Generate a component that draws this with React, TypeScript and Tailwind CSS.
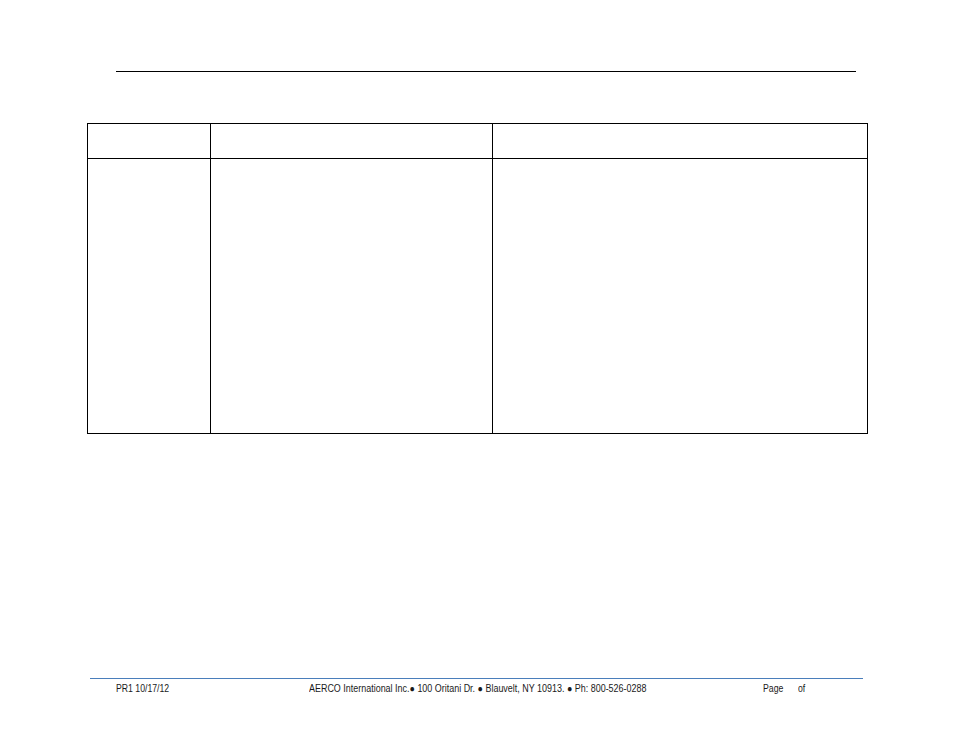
export default function App() {
  return (
    <div className="w-[954px] h-[738px] bg-white overflow-hidden">
      {/* header rule */}
      <div className="pt-[71px]">
        <div className="ml-[116px] w-[740px] h-px bg-black" />
      </div>

      {/* table */}
      <div className="mt-[51px] ml-[87px] w-[781px] border border-black">
        <div className="grid grid-cols-[123px_282px_1fr] border-b border-black">
          <div className="h-[34px] border-r border-black" />
          <div className="h-[34px] border-r border-black" />
          <div className="h-[34px]" />
        </div>
        <div className="grid grid-cols-[123px_282px_1fr]">
          <div className="h-[274px] border-r border-black" />
          <div className="h-[274px] border-r border-black" />
          <div className="h-[274px]" />
        </div>
      </div>

      {/* footer */}
      <div className="mt-[244px] ml-[90px] w-[773px] h-px bg-[#4a7ebb]" />
      <div
        className="mt-[3px] flex items-baseline pl-[116px] text-[10px] leading-[14px] text-[#1a1a1a] whitespace-nowrap"
        style={{ fontFamily: '"Liberation Sans", Arial, sans-serif' }}
      >
        <span className="w-[193px]">
          <span className="inline-block origin-left scale-x-[0.87]">PR1 10/17/12</span>
        </span>
        <span className="w-[454px]">
          <span className="inline-block origin-left scale-x-[0.895]">
            AERCO International Inc.● 100 Oritani Dr. ● Blauvelt, NY 10913. ● Ph: 800-526-0288
          </span>
        </span>
        <span className="w-[35px]">
          <span className="inline-block origin-left scale-x-[0.87]">Page</span>
        </span>
        <span className="inline-block origin-left scale-x-[0.87]">of</span>
      </div>
    </div>
  );
}
